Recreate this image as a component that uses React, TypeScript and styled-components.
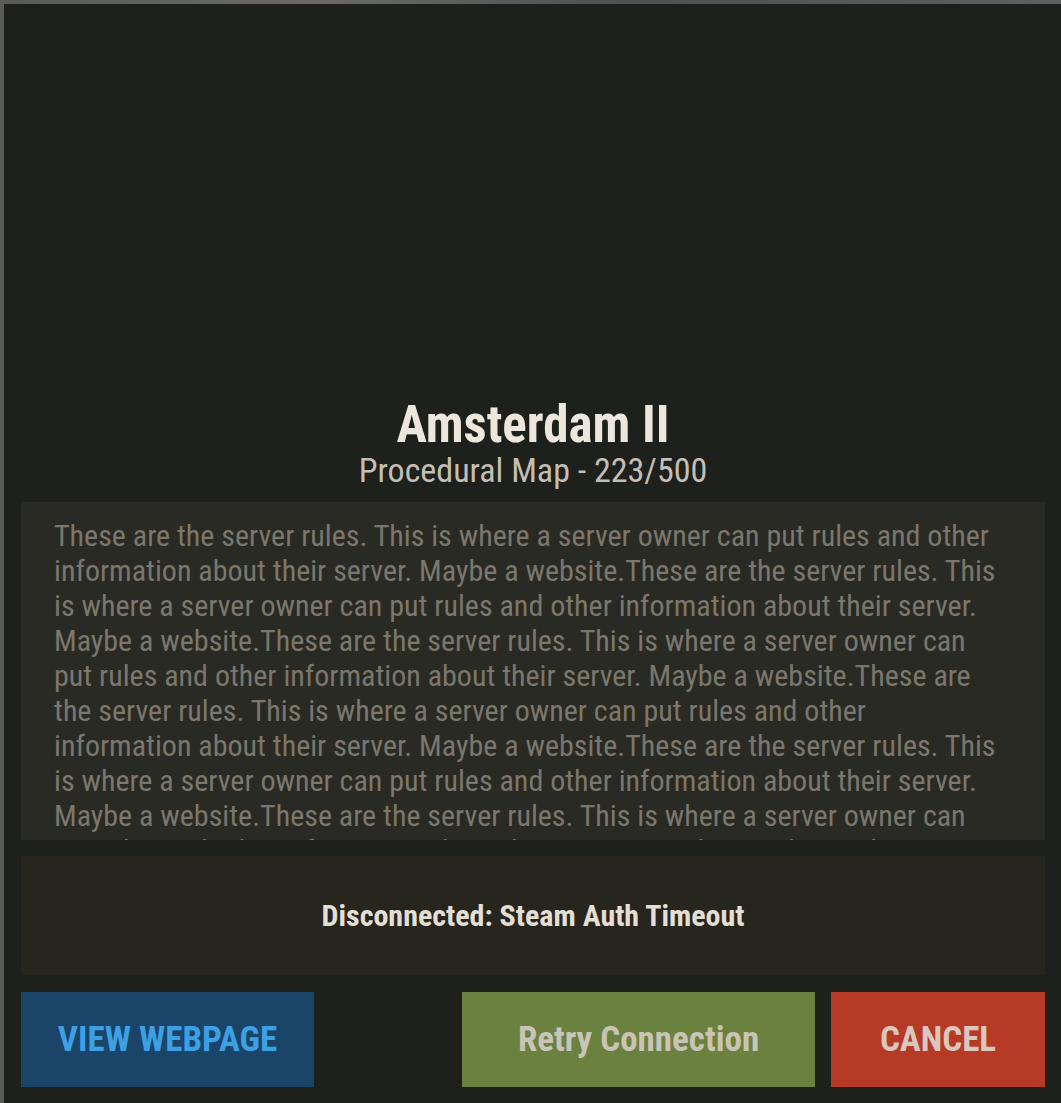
import React from "react";
import styled, { createGlobalStyle } from "styled-components";

const Global = createGlobalStyle`
  html, body { margin: 0; padding: 0; background: #55575a; }
  body { font-family: "Roboto Condensed", Roboto, "Liberation Sans", sans-serif; font-stretch: 75%; }
  * { box-sizing: border-box; }
`;

const Backdrop = styled.div`
  width: 1061px;
  height: 1103px;
  padding: 4px 0 0 4px;
  background: linear-gradient(90deg, #5a5a58 0%, #6b6a66 30%, #4e5052 60%, #5f6060 100%);
  overflow: hidden;
`;

const Panel = styled.div`
  width: 1057px;
  height: 1099px;
  background: #1d201b;
  display: flex;
  flex-direction: column;
  padding: 0 16px 0 17px;
`;

const Header = styled.div`
  height: 498px;
  display: flex;
  flex-direction: column;
  justify-content: flex-end;
  align-items: center;
  padding-bottom: 13px;
`;

const Title = styled.h1`
  margin: 0;
  font-size: 51px;
  font-weight: 700;
  color: #ede6dd;
  line-height: 52px;
`;

const Subtitle = styled.div`
  font-size: 34px;
  color: #c4bfb6;
  line-height: 38px;
`;

const Rules = styled.div`
  height: 338px;
  overflow: hidden;
  background: #2a2a24;
  padding: 16px 36px 0 33px;
  font-size: 30px;
  line-height: 35px;
  color: #7b776c;
`;

const Status = styled.div`
  margin-top: 16px;
  height: 119px;
  background: #26261f;
  display: flex;
  align-items: center;
  justify-content: center;
  font-size: 30px;
  font-weight: 700;
  color: #e4ded4;
`;

const ButtonRow = styled.div`
  margin-top: 17px;
  display: flex;
  height: 95px;
`;

const Button = styled.button<{ $bg: string; $fg: string; $w: number }>`
  width: ${(p) => p.$w}px;
  height: 95px;
  border: none;
  background: ${(p) => p.$bg};
  color: ${(p) => p.$fg};
  font-family: inherit;
  font-stretch: 75%;
  font-size: 35px;
  font-weight: 700;
  padding: 0;
  cursor: pointer;
`;

const Spacer = styled.div`
  flex: 1;
`;

const Gap = styled.div`
  width: 16px;
`;

const rule =
  "These are the server rules. This is where a server owner can put rules and other information about their server. Maybe a website.";

export default function App() {
  return (
    <>
      <Global />
      <Backdrop>
        <Panel>
          <Header>
            <Title>Amsterdam II</Title>
            <Subtitle>Procedural Map - 223/500</Subtitle>
          </Header>
          <Rules>{rule.repeat(7)}</Rules>
          <Status>Disconnected: Steam Auth Timeout</Status>
          <ButtonRow>
            <Button $bg="#1a4468" $fg="#3da0e4" $w={293}>VIEW WEBPAGE</Button>
            <Spacer />
            <Button $bg="#6a813f" $fg="#c9c4b6" $w={353}>Retry Connection</Button>
            <Gap />
            <Button $bg="#b63a26" $fg="#dac8bf" $w={214}>CANCEL</Button>
          </ButtonRow>
        </Panel>
      </Backdrop>
    </>
  );
}
